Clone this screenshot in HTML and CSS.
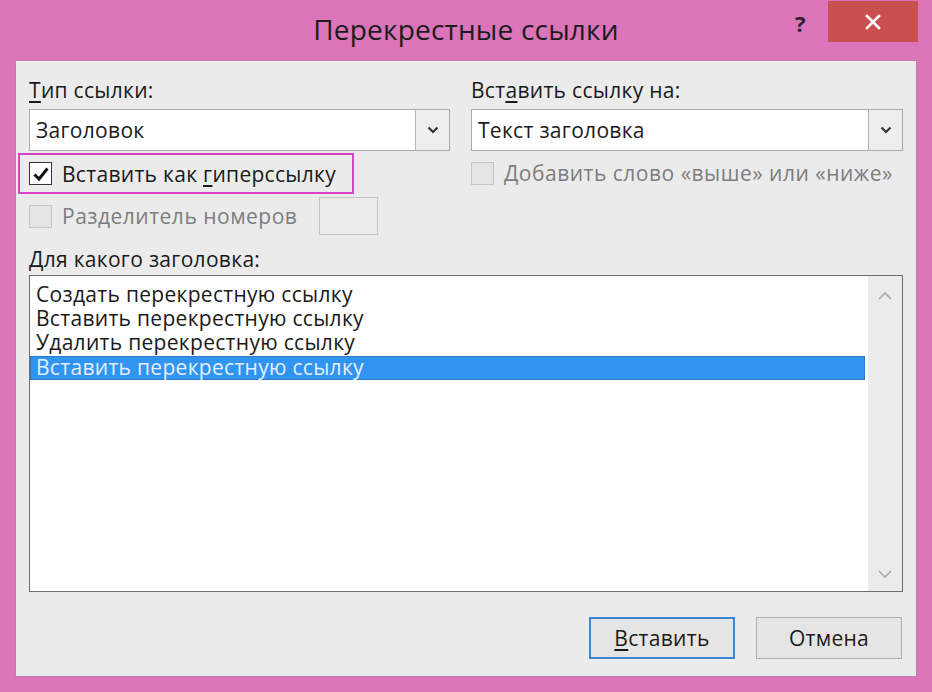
FILE: index.html
```html
<!DOCTYPE html>
<html lang="ru">
<head>
    <meta charset="UTF-8">
    <title>Перекрестные ссылки</title>
    <link rel="stylesheet" href="styles.css">
</head>
<body>
    <div class="window">
        <div class="titlebar">
            <div class="title">Перекрестные ссылки</div>
            <div class="help">?</div>
            <div class="close">
                <svg width="18" height="18" viewBox="0 0 18 18">
                    <path d="M3 3 L15 15 M15 3 L3 15" stroke="#fff" stroke-width="2.6" stroke-linecap="square"/>
                </svg>
            </div>
        </div>

        <div class="client">
            <div class="top">
                <div class="col">
                    <div class="label"><u>Т</u>ип ссылки:</div>
                    <div class="combo">
                        <div class="combo-text">Заголовок</div>
                        <div class="combo-btn">
                            <svg width="12" height="8" viewBox="0 0 12 8"><path d="M1.5 1.5 L6 6 L10.5 1.5" fill="none" stroke="#333" stroke-width="2.2"/></svg>
                        </div>
                    </div>
                    <div class="check-row highlight">
                        <span class="box checked">
                            <svg width="18" height="16" viewBox="0 0 18 16"><path d="M2.5 8.5 L7 13 L15.5 2.5" fill="none" stroke="#111" stroke-width="3"/></svg>
                        </span>
                        <span class="check-text">Вставить как <u>г</u>иперссылку</span>
                    </div>
                    <div class="check-row sep-row">
                        <span class="box disabled"></span>
                        <span class="check-text muted">Разделитель номеров</span>
                        <span class="small-input"></span>
                    </div>
                </div>
                <div class="col">
                    <div class="label">Вст<u>а</u>вить ссылку на:</div>
                    <div class="combo">
                        <div class="combo-text">Текст заголовка</div>
                        <div class="combo-btn">
                            <svg width="12" height="8" viewBox="0 0 12 8"><path d="M1.5 1.5 L6 6 L10.5 1.5" fill="none" stroke="#333" stroke-width="2.2"/></svg>
                        </div>
                    </div>
                    <div class="check-row add-row">
                        <span class="box disabled"></span>
                        <span class="check-text muted">Добавить слово «выше» или «ниже»</span>
                    </div>
                </div>
            </div>

            <div class="label list-label"><u>Д</u>ля какого заголовка:</div>
            <div class="listbox">
                <div class="items">
                    <div class="item">Создать перекрестную ссылку</div>
                    <div class="item">Вставить перекрестную ссылку</div>
                    <div class="item">Удалить перекрестную ссылку</div>
                    <div class="item selected">Вставить перекрестную ссылку</div>
                </div>
                <div class="scrollbar">
                    <svg width="14" height="9" viewBox="0 0 14 9"><path d="M1 8 L7 2 L13 8" fill="none" stroke="#a8a8a8" stroke-width="1.6"/></svg>
                    <svg width="14" height="9" viewBox="0 0 14 9"><path d="M1 1 L7 7 L13 1" fill="none" stroke="#a8a8a8" stroke-width="1.6"/></svg>
                </div>
            </div>

            <div class="buttons">
                <div class="btn default"><u>В</u>ставить</div>
                <div class="btn">Отмена</div>
            </div>
        </div>
    </div>
</body>
</html>
```

FILE: styles.css
```css
body {
    margin: 0;
    background: #db74b9;
    font-family: "Open Sans", "Noto Sans", sans-serif;
    color: #1a1a1a;
}

.window {
    width: 932px;
    height: 692px;
    display: flex;
    flex-direction: column;
    background: #db74b9;
}

/* title bar */
.titlebar {
    position: relative;
    height: 60px;
    display: flex;
    align-items: center;
    justify-content: center;
}
.title {
    font-size: 28px;
    color: #1c1c1c;
    margin-top: -3px;
    letter-spacing: 0.2px;
}
.help {
    position: absolute;
    left: 795px;
    top: 8px;
    font-size: 22px;
    font-weight: 700;
    color: #2a2036;
}
.close {
    position: absolute;
    top: 1px;
    right: 14px;
    width: 90px;
    height: 41px;
    background: #c8504f;
    display: flex;
    align-items: center;
    justify-content: center;
}

/* dialog body */
.client {
    flex: 1;
    margin: 0 15px 15px 15px;
    background: #ebebeb;
    padding: 18px 14px 18px 14px;
    box-shadow: inset 0 0 0 1px #c77aa9;
    font-size: 21px;
    letter-spacing: 0.3px;
}
.top {
    display: grid;
    grid-template-columns: 421px 432px;
    column-gap: 21px;
}
.label {
    line-height: 24px;
    height: 24px;
}
u {
    text-decoration-thickness: 2px;
    text-underline-offset: 3px;
}

.combo {
    margin-top: 7px;
    height: 42px;
    box-sizing: border-box;
    border: 1px solid #a9a9a9;
    background: #fff;
    display: flex;
    align-items: stretch;
}
.combo-text {
    flex: 1;
    display: flex;
    align-items: center;
    padding-left: 6px;
}
.combo-btn {
    width: 33px;
    border-left: 1px solid #b5b5b5;
    background: #eeeeee;
    display: flex;
    align-items: center;
    justify-content: center;
}

.check-row {
    display: flex;
    align-items: center;
}
.highlight {
    margin: 2px 0 0 -11px;
    width: 336px;
    height: 41px;
    box-sizing: border-box;
    border: 2px solid #d943c9;
    padding-left: 9px;
}
.sep-row {
    margin-top: 3px;
    height: 38px;
}
.add-row {
    margin-top: 10px;
    height: 24px;
}
.box {
    width: 23px;
    height: 23px;
    box-sizing: border-box;
    border: 1px solid #333;
    background: #fff;
    display: flex;
    align-items: center;
    justify-content: center;
    margin-right: 10px;
    flex-shrink: 0;
}
.box.disabled {
    border-color: #c6c6c6;
    background: #e4e4e4;
}
.muted {
    color: #7d7d7d;
    letter-spacing: 0.5px;
}
.small-input {
    margin-left: 22px;
    width: 59px;
    height: 38px;
    box-sizing: border-box;
    border: 1px solid #c3c3c3;
    background: #ececec;
}

.list-label {
    margin-top: 12px;
}
.listbox {
    margin-top: 4px;
    height: 317px;
    box-sizing: border-box;
    border: 1px solid #6e6e6e;
    background: #fff;
    display: flex;
}
.items {
    flex: 1;
    padding-top: 6px;
}
.item {
    height: 24px;
    line-height: 24px;
    padding-left: 6px;
    margin-right: 3px;
    white-space: nowrap;
}
.item.selected {
    margin-top: 2px;
    line-height: 22px;
    background: #3194f0;
    color: #e2efff;
    box-shadow: inset 0 0 0 1px #2a78c8;
}
.scrollbar {
    width: 34px;
    background: #ececec;
    display: flex;
    flex-direction: column;
    align-items: center;
    justify-content: space-between;
    padding: 15px 0 12px;
}

.buttons {
    margin-top: 25px;
    display: flex;
    justify-content: flex-end;
    gap: 21px;
    padding-right: 1px;
}
.btn {
    width: 146px;
    height: 42px;
    box-sizing: border-box;
    border: 1px solid #acacac;
    background: #e5e5e5;
    display: flex;
    align-items: center;
    justify-content: center;
}
.btn.default {
    border: 2px solid #3d86d6;
}
```
